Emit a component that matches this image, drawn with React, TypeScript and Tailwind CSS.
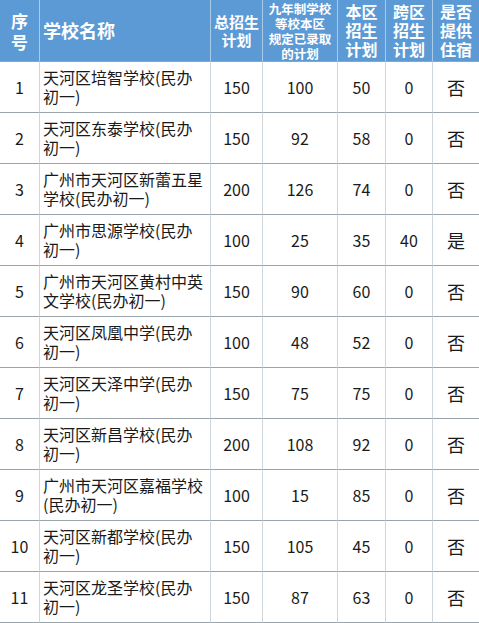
import React from "react";

const rows: [string, string, string, string, string, string, string][] = [
  ["1", "天河区培智学校(民办初一)", "150", "100", "50", "0", "否"],
  ["2", "天河区东泰学校(民办初一)", "150", "92", "58", "0", "否"],
  ["3", "广州市天河区新蕾五星学校(民办初一)", "200", "126", "74", "0", "否"],
  ["4", "广州市思源学校(民办初一)", "100", "25", "35", "40", "是"],
  ["5", "广州市天河区黄村中英文学校(民办初一)", "150", "90", "60", "0", "否"],
  ["6", "天河区凤凰中学(民办初一)", "100", "48", "52", "0", "否"],
  ["7", "天河区天泽中学(民办初一)", "150", "75", "75", "0", "否"],
  ["8", "天河区新昌学校(民办初一)", "200", "108", "92", "0", "否"],
  ["9", "广州市天河区嘉福学校(民办初一)", "100", "15", "85", "0", "否"],
  ["10", "天河区新都学校(民办初一)", "150", "105", "45", "0", "否"],
  ["11", "天河区龙圣学校(民办初一)", "150", "87", "63", "0", "否"],
];

const font = { fontFamily: '"Noto Sans CJK SC", "Liberation Serif", sans-serif' };

export default function App() {
  const hc =
    "bg-[#5b9ad5] text-white border-r border-[#a9cbea] flex flex-col items-center justify-center text-center font-bold";
  const bc =
    "bg-white text-[#1a1a1a] border-r border-b border-[#cfd6dc] flex items-center justify-center text-center text-[16px]";
  return (
    <div className="w-[479px] h-[623px] overflow-hidden bg-white" style={font}>
      <div className="grid grid-cols-[40px_171px_52px_75px_48px_47px_46px]">
        <div className={`${hc} h-[62px] text-[17px] leading-[21px] border-b border-b-[#8aa6c0]`}>
          <span>序</span>
          <span>号</span>
        </div>
        <div className={`${hc} h-[62px] !items-start pl-[3px] text-[18px] border-b border-b-[#8aa6c0]`}>
          <span>学校名称</span>
        </div>
        <div className={`${hc} h-[62px] text-[15px] leading-[18px] border-b border-b-[#8aa6c0]`}>
          <span>总招生</span>
          <span>计划</span>
        </div>
        <div className={`${hc} h-[62px] text-[12.5px] leading-[15px] border-b border-b-[#8aa6c0]`}>
          <span>九年制学校</span>
          <span>等校本区</span>
          <span>规定已录取</span>
          <span>的计划</span>
        </div>
        <div className={`${hc} h-[62px] text-[16px] leading-[19px] border-b border-b-[#8aa6c0]`}>
          <span>本区</span>
          <span>招生</span>
          <span>计划</span>
        </div>
        <div className={`${hc} h-[62px] text-[16px] leading-[19px] border-b border-b-[#8aa6c0]`}>
          <span>跨区</span>
          <span>招生</span>
          <span>计划</span>
        </div>
        <div className={`${hc} h-[62px] text-[16px] leading-[19px] border-r-0 border-b border-b-[#8aa6c0]`}>
          <span>是否</span>
          <span>提供</span>
          <span>住宿</span>
        </div>
        {rows.map((r) => (
          <React.Fragment key={r[0]}>
            <div className={`${bc} h-[51px] border-b-[#9aa4ad]`}>{r[0]}</div>
            <div className={`${bc} h-[51px] border-b-[#9aa4ad] !justify-start !text-left pl-[3px] pr-[2px] leading-[19px]`}>
              <span>{r[1]}</span>
            </div>
            <div className={`${bc} h-[51px] border-b-[#9aa4ad]`}>{r[2]}</div>
            <div className={`${bc} h-[51px] border-b-[#9aa4ad]`}>{r[3]}</div>
            <div className={`${bc} h-[51px] border-b-[#9aa4ad]`}>{r[4]}</div>
            <div className={`${bc} h-[51px] border-b-[#9aa4ad]`}>{r[5]}</div>
            <div className={`${bc} h-[51px] border-b-[#9aa4ad] border-r-0 text-[18px]`}>{r[6]}</div>
          </React.Fragment>
        ))}
      </div>
    </div>
  );
}
